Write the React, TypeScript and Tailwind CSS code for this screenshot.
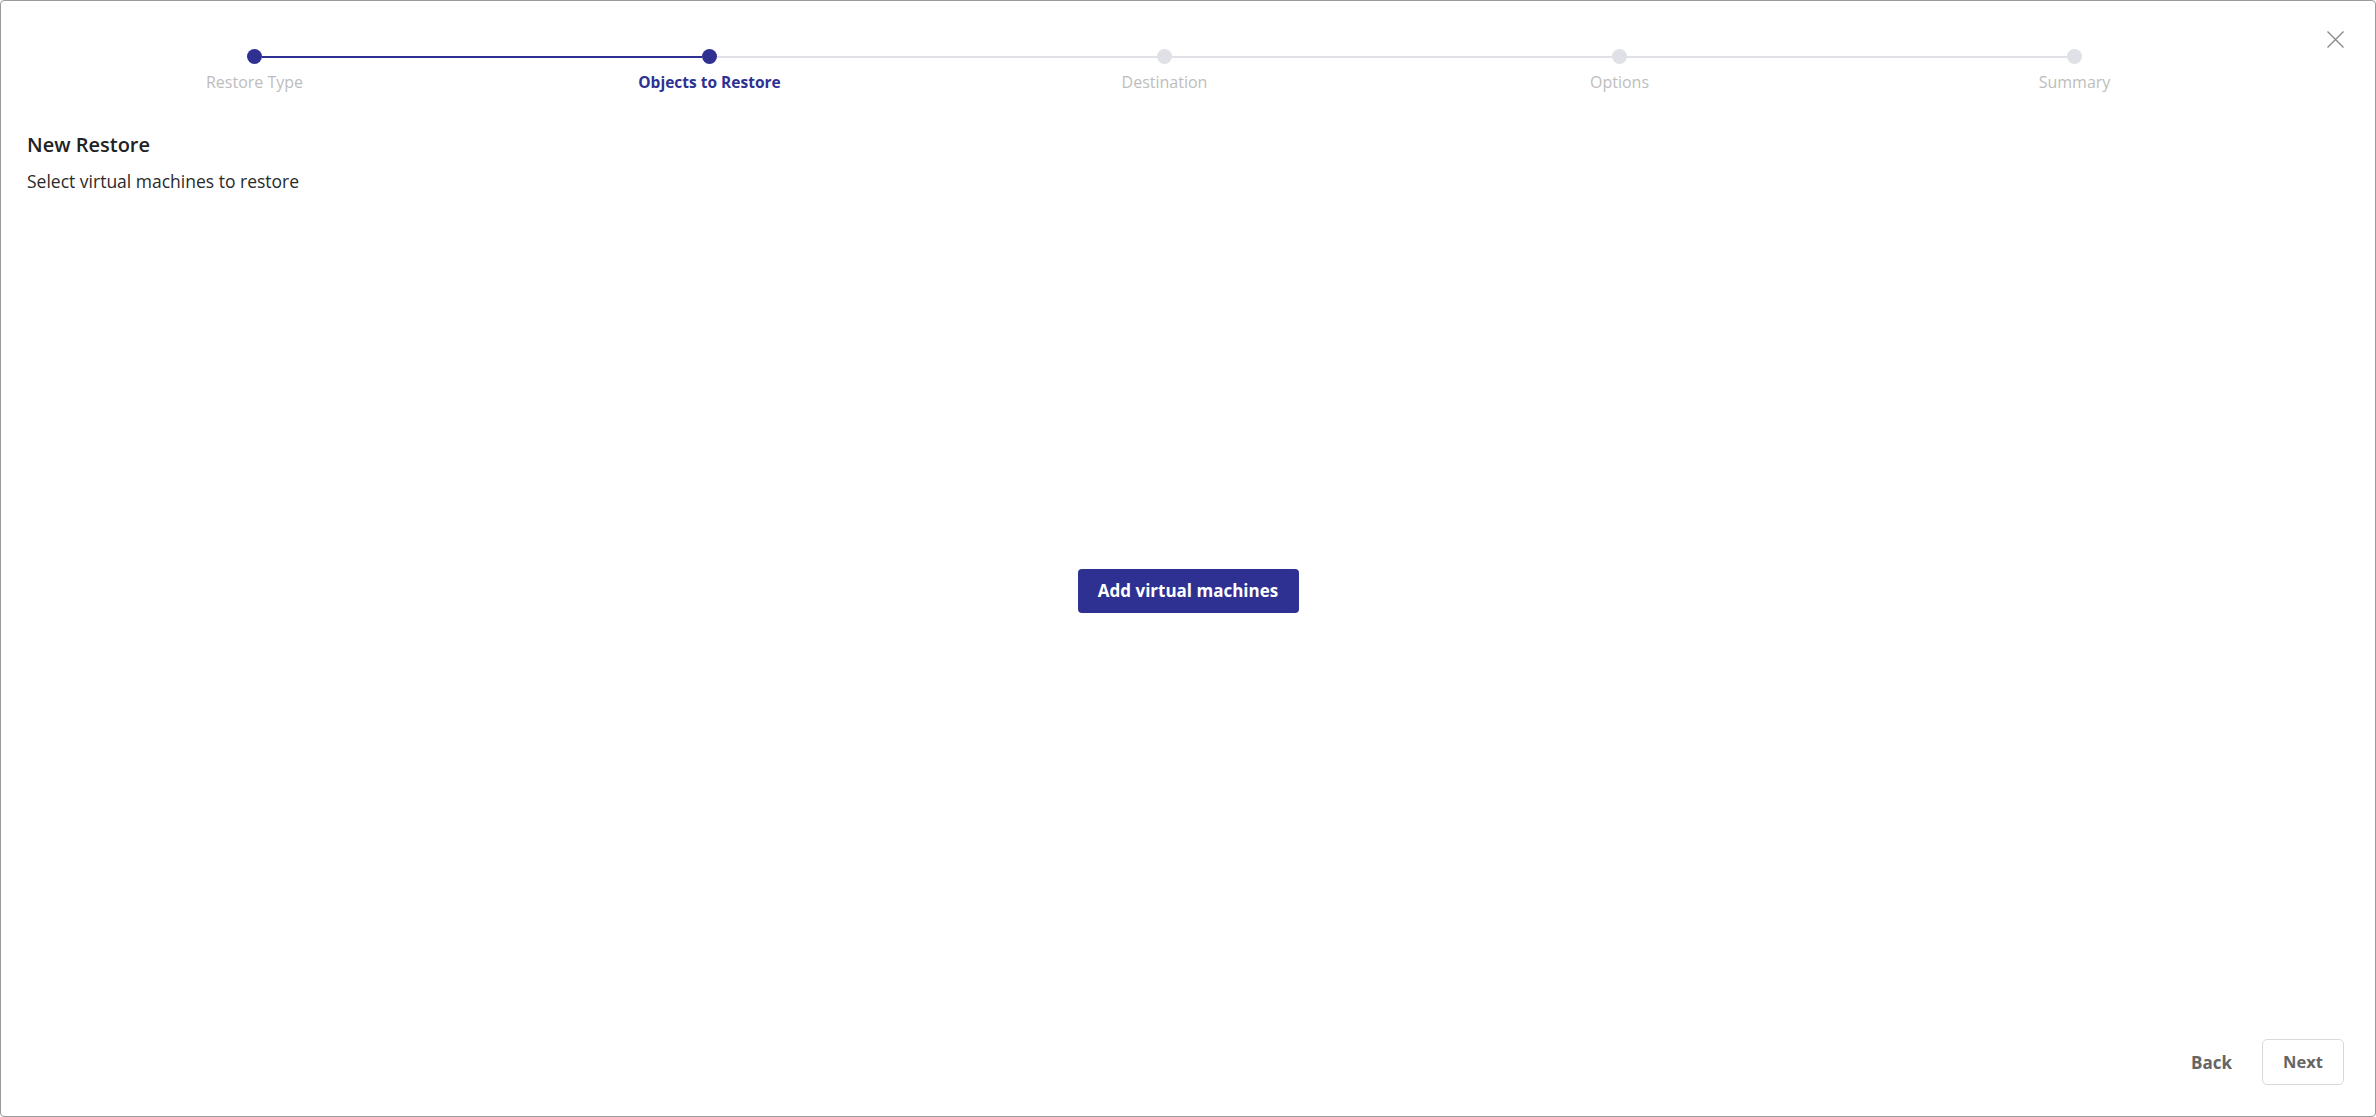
const steps = [
  { label: 'Restore Type', state: 'done' },
  { label: 'Objects to Restore', state: 'active' },
  { label: 'Destination', state: 'todo' },
  { label: 'Options', state: 'todo' },
  { label: 'Summary', state: 'todo' },
] as const;

function Stepper() {
  return (
    <div className="pl-[26px] pr-[73px] pt-[48px]">
      {/* dots and connectors */}
      <div className="flex items-center">
        <div className="flex-[0.5]" />
        {steps.map((step, i) => (
          <div key={step.label} className="contents">
            {i > 0 && (
              <div
                className={
                  step.state === 'todo'
                    ? 'h-[2px] flex-1 bg-[#dfe1e6]'
                    : 'h-[2px] flex-1 bg-[#2e3192]'
                }
              />
            )}
            <div
              className={
                step.state === 'todo'
                  ? 'h-[15px] w-[15px] shrink-0 rounded-full bg-[#dfe1e6]'
                  : 'h-[15px] w-[15px] shrink-0 rounded-full bg-[#2e3192]'
              }
            />
          </div>
        ))}
        <div className="flex-[0.5]" />
      </div>
      {/* labels */}
      <div className="mt-[8px] flex">
        {steps.map((step) => (
          <div
            key={step.label}
            className={
              step.state === 'active'
                ? 'flex-1 text-center text-[15.5px] leading-5 font-bold text-[#2e3192]'
                : 'flex-1 text-center text-[16px] leading-5 text-[#bdbdbd]'
            }
          >
            {step.label}
          </div>
        ))}
      </div>
    </div>
  );
}

export default function App() {
  return (
    <div
      className="relative flex h-screen w-full flex-col overflow-hidden rounded-[4px] border border-[#9a9a9a] bg-white"
      style={{ fontFamily: '"Open Sans", Lato, sans-serif' }}
    >
      <button className="absolute right-[31px] top-[30px] h-[17px] w-[17px] text-[#8a8a8a]">
        <svg viewBox="0 0 17 17" width="17" height="17" fill="none" stroke="currentColor" strokeWidth="1.4">
          <path d="M0.5 0.5 16.5 16.5M16.5 0.5 0.5 16.5" />
        </svg>
      </button>

      <Stepper />

      <div className="px-[26px] pt-[40px]">
        <h1 className="text-[20px] leading-[26px] font-semibold text-[#222222]">New Restore</h1>
        <p className="mt-[11px] text-[17.5px] leading-6 text-[#2a2a2a]">Select virtual machines to restore</p>
      </div>

      <div className="flex flex-1 items-center justify-center pb-[50px]">
        <button className="h-[44px] w-[221px] rounded-[4px] bg-[#2e3192] text-[17px] font-bold text-white">
          Add virtual machines
        </button>
      </div>

      <div className="flex items-center justify-end gap-[14px] pb-[31px] pr-[31px]">
        <button className="px-[16px] pt-[2px] text-[17px] font-bold text-[#666666]">Back</button>
        <button className="h-[46px] w-[82px] rounded-[5px] border border-[#d9d9d9] text-[16.5px] font-bold text-[#666666]">
          Next
        </button>
      </div>
    </div>
  );
}
